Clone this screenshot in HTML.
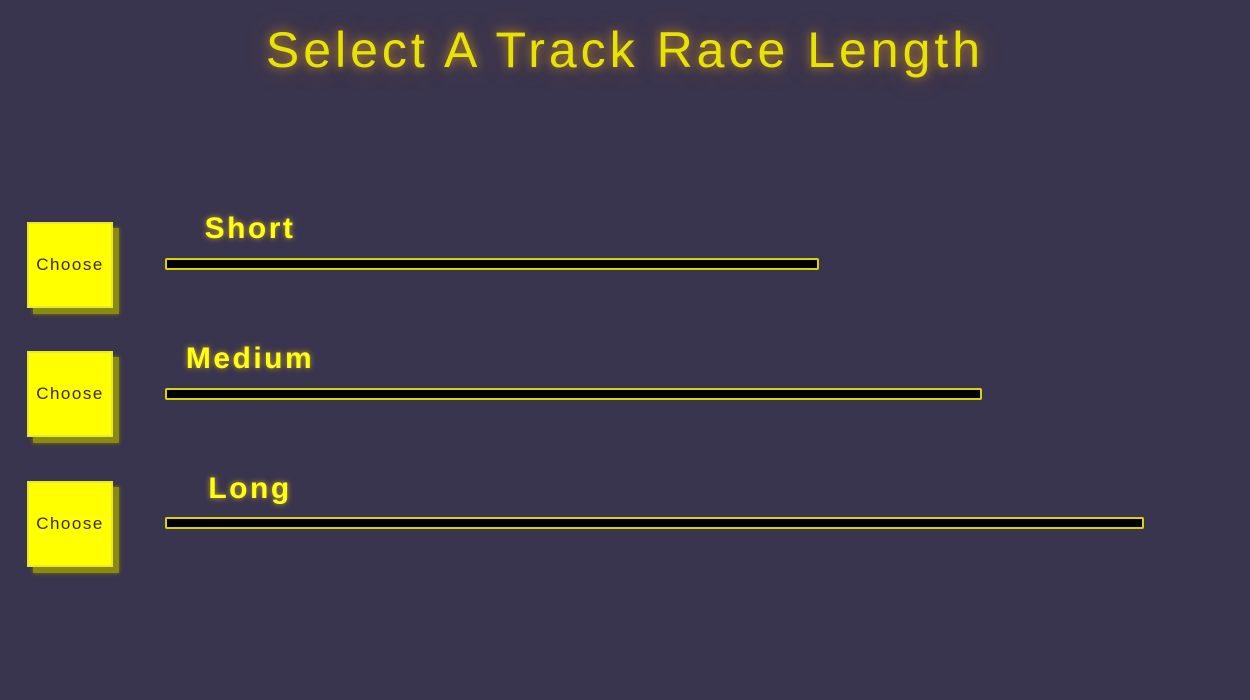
<!DOCTYPE html>
<html><head><style>
body{margin:0;width:1250px;height:700px;background:#3a354e;overflow:hidden;font-family:"Liberation Sans",sans-serif;position:relative}
.t{position:absolute;left:0;width:1250px;top:22px;text-align:center;font-size:50px;color:#e6e400;letter-spacing:4px;text-shadow:0 0 10px rgba(230,160,30,.7),0 0 22px rgba(200,120,40,.5);line-height:56px}
.b{position:absolute;left:27px;width:82px;height:82px;background:#ffff00;border:2px solid #e8e830;box-shadow:6px 6px 0 #8a8a10, 6px 6px 4px #7a7a10;display:flex;align-items:center;justify-content:center;font-size:17px;letter-spacing:1.5px;color:#3a2a10}
.l{position:absolute;left:150px;width:200px;text-align:center;font-size:30px;font-weight:bold;color:#ffff10;letter-spacing:2.5px;text-shadow:0 0 6px rgba(255,210,40,.7);line-height:34px}
.bar{position:absolute;left:165px;height:8px;background:#000;border:2px solid #d8d400;border-radius:2px}
</style></head><body>
<div class="t">Select A Track Race Length</div>
<div class="b" style="top:222px">Choose</div>
<div class="b" style="top:351px">Choose</div>
<div class="b" style="top:481px">Choose</div>
<div class="l" style="top:212px">Short</div>
<div class="l" style="top:342px">Medium</div>
<div class="l" style="top:472px">Long</div>
<div class="bar" style="top:258px;width:650px"></div>
<div class="bar" style="top:388px;width:813px"></div>
<div class="bar" style="top:517px;width:975px"></div>
</body></html>
